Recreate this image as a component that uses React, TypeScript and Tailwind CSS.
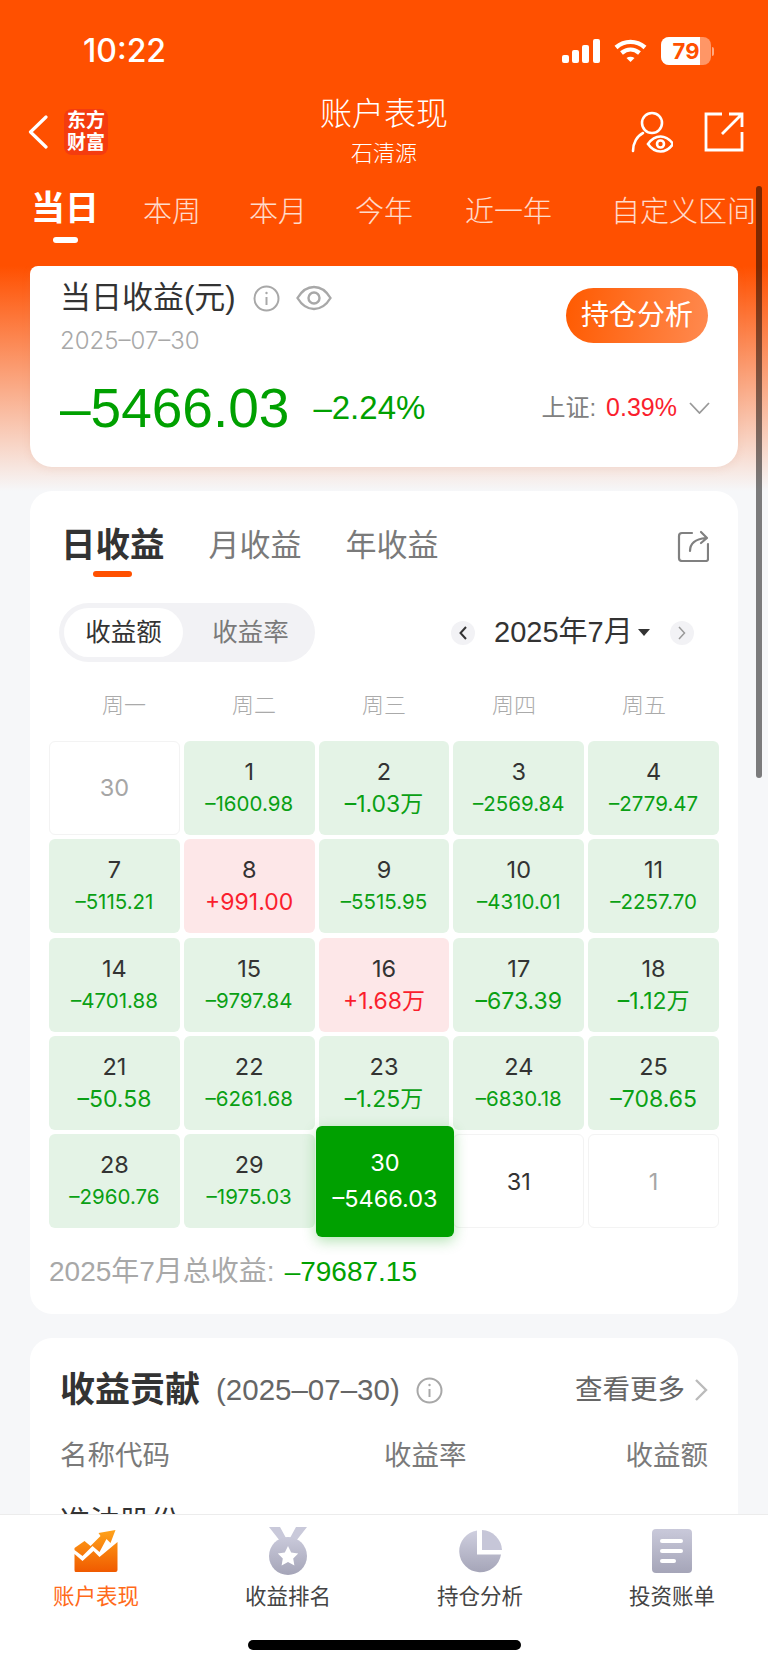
const FONT = '[font-family:"Liberation_Sans","Noto_Sans_CJK_SC",sans-serif]';

type Cell = { day: string; value?: string; kind: 'down' | 'up' | 'blank' | 'future' | 'today'; small?: boolean };

const CELLS: Cell[] = [
  { day: '30', kind: 'blank' },
  { day: '1', value: '–1600.98', kind: 'down', small: true },
  { day: '2', value: '–1.03万', kind: 'down' },
  { day: '3', value: '–2569.84', kind: 'down', small: true },
  { day: '4', value: '–2779.47', kind: 'down', small: true },
  { day: '7', value: '–5115.21', kind: 'down', small: true },
  { day: '8', value: '+991.00', kind: 'up' },
  { day: '9', value: '–5515.95', kind: 'down', small: true },
  { day: '10', value: '–4310.01', kind: 'down', small: true },
  { day: '11', value: '–2257.70', kind: 'down', small: true },
  { day: '14', value: '–4701.88', kind: 'down', small: true },
  { day: '15', value: '–9797.84', kind: 'down', small: true },
  { day: '16', value: '+1.68万', kind: 'up' },
  { day: '17', value: '–673.39', kind: 'down' },
  { day: '18', value: '–1.12万', kind: 'down' },
  { day: '21', value: '–50.58', kind: 'down' },
  { day: '22', value: '–6261.68', kind: 'down', small: true },
  { day: '23', value: '–1.25万', kind: 'down' },
  { day: '24', value: '–6830.18', kind: 'down', small: true },
  { day: '25', value: '–708.65', kind: 'down' },
  { day: '28', value: '–2960.76', kind: 'down', small: true },
  { day: '29', value: '–1975.03', kind: 'down', small: true },
  { day: '30', value: '–5466.03', kind: 'today' },
  { day: '31', kind: 'future' },
  { day: '1', kind: 'blank' },
];

function InfoIcon({ size = 27 }: { size?: number }) {
  return (
    <svg width={size} height={size} viewBox="0 0 27 27" fill="none" stroke="#a8a8a8" strokeWidth="2">
      <circle cx="13.5" cy="13.5" r="12" />
      <path d="M13.5 12v8" />
      <circle cx="13.5" cy="8" r="1.2" fill="#a8a8a8" stroke="none" />
    </svg>
  );
}

function CalendarCell({ cell }: { cell: Cell }) {
  if (cell.kind === 'blank' || cell.kind === 'future') {
    return (
      <div className={`h-[94px] rounded-[6px] border border-[#f3f3f3] bg-white flex items-center justify-center text-[23.5px] ${cell.kind === 'blank' ? 'text-[#a6a6a6]' : 'text-[#333]'}`}>
        {cell.day}
      </div>
    );
  }
  if (cell.kind === 'today') {
    return (
      <div className="relative h-[94px]">
        <div className="absolute -left-[3px] -right-[5px] -top-[8px] -bottom-[9px] z-10 rounded-[6px] bg-[#00a000] text-white flex flex-col items-center pt-[21px] shadow-[0_4px_14px_rgba(0,160,0,0.3)]">
          <div className="text-[23.5px] leading-[32px]">{cell.day}</div>
          <div className="text-[23.5px] leading-[32px] mt-[4px]">{cell.value}</div>
        </div>
      </div>
    );
  }
  const up = cell.kind === 'up';
  return (
    <div className={`h-[94px] rounded-[6px] flex flex-col items-center pt-[15px] ${up ? 'bg-[#fde7e8]' : 'bg-[#e4f3e6]'}`}>
      <div className="text-[23.5px] leading-[32px] text-[#333]">{cell.day}</div>
      <div className={`leading-[32px] ${cell.small ? 'text-[20.5px]' : 'text-[23px]'} ${up ? 'text-[#fa1e2d]' : 'text-[#0aa014]'}`}>{cell.value}</div>
    </div>
  );
}

function StatusBar() {
  return (
    <div className="flex items-center justify-between h-[102px] pl-[83px] pr-[54px] text-white">
      <span className="[font-family:Inter,sans-serif] text-[32px] font-medium leading-[32px]">10:22</span>
      <div className="flex items-center gap-[14px]">
        <svg width="38" height="24" viewBox="0 0 38 24" fill="white">
          <rect x="0" y="16" width="7" height="8" rx="2" />
          <rect x="10" y="11" width="7" height="13" rx="2" />
          <rect x="20" y="6" width="7" height="18" rx="2" />
          <rect x="31" y="0" width="7" height="24" rx="2" />
        </svg>
        <svg width="33" height="24" viewBox="0 0 33 24" fill="none" stroke="white" strokeWidth="4.4">
          <path d="M2 8.5C10.5 1 22.5 1 31 8.5" />
          <path d="M7.5 14c5.500-4.500 12.500-4.500 18 0" />
          <path d="M12.500 19l4 4 4-4c-2.500-1.800-5.500-1.800-8 0z" fill="white" stroke="none" />
        </svg>
        <div className="flex items-center">
          <div className="relative w-[50px] h-[28px] rounded-[8px] overflow-hidden bg-white/40">
            <div className="h-full w-[39px] bg-white" />
            <span className="absolute inset-0 flex items-center justify-center [font-family:Inter,sans-serif] text-[22px] font-bold text-[#ff5000]">79</span>
          </div>
          <div className="w-[2px] h-[9px] ml-[1px] rounded-r-full bg-white/50" />
        </div>
      </div>
    </div>
  );
}

function NavBar() {
  return (
    <div className="flex items-center justify-between h-[60px] pl-[28px] pr-[24px] text-white">
      <div className="flex items-center gap-[16px] w-[180px]">
        <svg width="20" height="34" viewBox="0 0 20 34" fill="none" stroke="white" strokeWidth="3.2" strokeLinecap="round" strokeLinejoin="round">
          <path d="M18 2 2.500 17 18 32" />
        </svg>
        <div className="w-[44px] h-[46px] rounded-[8px] bg-[#f43c0f] flex flex-col items-center justify-center text-[19px] leading-[22px] font-bold">
          <span>东方</span>
          <span>财富</span>
        </div>
      </div>
      <div className="flex flex-col items-center -ml-[4px]">
        <div className="text-[32px] leading-[44px] font-light">账户表现</div>
        <div className="text-[22px] leading-[36px] font-light">石清源</div>
      </div>
      <div className="flex items-center justify-end gap-[31px] w-[180px]">
        <svg width="44" height="42" viewBox="0 0 44 42" fill="none" stroke="white" strokeWidth="2.6" strokeLinecap="round">
          <circle cx="23" cy="12" r="10" />
          <path d="M4 40c0-8 4-15 10-18" />
          <path d="M19 33c3.500-5 8-7.500 12.500-7.500S40.500 28 44 33c-3.500 5-8 7.500-12.500 7.500S22.500 38 19 33z" />
          <circle cx="31.500" cy="33" r="3.500" />
        </svg>
        <svg width="40" height="40" viewBox="0 0 40 40" fill="none" stroke="white" strokeWidth="2.8">
          <path d="M18 2H2v36h36V20" />
          <path d="M18 22 38 2M25 2h13v13" />
        </svg>
      </div>
    </div>
  );
}

function RangeTabs() {
  return (
    <div className="relative flex items-center h-[102px] pl-[31px] text-[29px] text-white/80 font-light whitespace-nowrap">
      <span className="text-[34px] font-bold text-white -mt-[10px]">当日</span>
      <span className="ml-[44px]">本周</span>
      <span className="ml-[48px]">本月</span>
      <span className="ml-[48px]">今年</span>
      <span className="ml-[52px]">近一年</span>
      <span className="ml-[59px]">自定义区间</span>
      <div className="absolute left-[53px] top-[75px] w-[25px] h-[6px] rounded-full bg-white" />
    </div>
  );
}

function HeroCard() {
  return (
    <div className="mx-[30px] h-[201px] rounded-b-[22px] rounded-t-[8px] bg-white shadow-[0_2px_8px_rgba(200,120,90,0.12)] px-[30px] pt-[12px]">
      <div className="flex justify-between">
        <div>
          <div className="flex items-center">
            <span className="text-[31px] leading-[40px] text-[#333]">当日收益(元)</span>
            <span className="ml-[17px]"><InfoIcon /></span>
            <svg className="ml-[16px]" width="36" height="26" viewBox="0 0 36 26" fill="none" stroke="#a8a8a8" strokeWidth="2.4">
              <path d="M1.500 13C6 5.500 12 2 18 2s12 3.500 16.500 11C30 20.500 24 24 18 24S6 20.500 1.500 13z" />
              <circle cx="18" cy="13" r="5.500" />
            </svg>
          </div>
          <div className="text-[24px] leading-[32px] mt-[7px] text-[#a8a8a8] [font-family:Inter,sans-serif] font-light">2025–07–30</div>
        </div>
        <div className="mt-[10px] w-[142px] h-[55px] rounded-full bg-[linear-gradient(100deg,#ff5a00,#ff8a50)] flex items-center justify-center text-[28px] text-white">
          持仓分析
        </div>
      </div>
      <div className="flex items-center mt-[19px] -mr-[2px]">
        <span className="text-[55px] leading-[64px] text-[#00a000] font-medium">–5466.03</span>
        <span className="ml-[24px] text-[33px] text-[#00a000]">–2.24%</span>
        <span className="ml-auto text-[24px] text-[#808080]">上证:</span>
        <span className="ml-[10px] text-[25px] text-[#fa1e2d]">0.39%</span>
        <svg className="ml-[12px]" width="21" height="12" viewBox="0 0 21 12" fill="none" stroke="#999" strokeWidth="1.800">
          <path d="m1 1 9.500 10L20 1" />
        </svg>
      </div>
    </div>
  );
}

function CalendarCard() {
  return (
    <div className="mt-[24px] mx-[30px] h-[823px] rounded-[22px] bg-white px-[19px] pt-[32px]">
      <div className="flex items-center justify-between h-[46px] pl-[16px] pr-[10px]">
        <div className="flex items-center gap-[44px] -ml-[4px]">
          <span className="text-[34.5px] font-bold text-[#333]">日收益</span>
          <span className="text-[31px] text-[#7a7a7a]">月收益</span>
          <span className="text-[31px] text-[#7a7a7a]">年收益</span>
        </div>
        <svg width="32" height="32" viewBox="0 0 32 32" fill="none" stroke="#808080" strokeWidth="2.200" strokeLinecap="round" strokeLinejoin="round">
          <path d="M15 3H5a3 3 0 0 0-3 3v22a3 3 0 0 0 3 3h24a2 2 0 0 0 2-2V14" />
          <path d="M13 21c0-8 5-12 16-13M24 2l6 6-6 5" />
        </svg>
      </div>
      <div className="ml-[44px] mt-[2px] w-[39px] h-[6px] rounded-full bg-[#ff5000]" />
      <div className="flex items-center mt-[26px] pl-[10px]">
        <div className="flex items-center w-[256px] h-[59px] rounded-full bg-[#f2f2f5] p-[5px]">
          <div className="w-[119px] h-full rounded-full bg-white flex items-center justify-center text-[25.5px] text-[#333]">收益额</div>
          <div className="flex-1 text-center pl-[8px] text-[25.5px] text-[#7a7a7a]">收益率</div>
        </div>
        <div className="ml-[136px] w-[24px] h-[24px] rounded-full bg-[#f2f2f5] flex items-center justify-center">
          <svg width="8" height="14" viewBox="0 0 8 14" fill="none" stroke="#333" strokeWidth="2"><path d="M7 1 1.500 7 7 13" /></svg>
        </div>
        <span className="ml-[19px] text-[29px] text-[#333]">2025年7月</span>
        <div className="ml-[5px] w-0 h-0 border-x-[6px] border-x-transparent border-t-[7px] border-t-[#333]" />
        <div className="ml-[20px] w-[24px] h-[24px] rounded-full bg-[#f2f2f5] flex items-center justify-center">
          <svg width="8" height="14" viewBox="0 0 8 14" fill="none" stroke="#999" strokeWidth="1.500"><path d="m1 1 5.500 6L1 13" /></svg>
        </div>
      </div>
      <div className="grid grid-cols-5 mt-[27px] px-[10px] h-[30px] items-center text-center text-[22px] font-light text-[#aaaaaa]">
        {['周一', '周二', '周三', '周四', '周五'].map((w) => (
          <div key={w}>{w}</div>
        ))}
      </div>
      <div className="grid grid-cols-5 gap-x-[4px] gap-y-[4.300px] mt-[22px] [font-family:Inter,'Noto_Sans_CJK_SC',sans-serif]">
        {CELLS.map((c, i) => (
          <CalendarCell key={i} cell={c} />
        ))}
      </div>
      <div className="mt-[26px] flex items-center leading-[36px]">
        <span className="text-[28px] text-[#a8a8a8]">2025年7月总收益:</span>
        <span className="ml-[10px] text-[28px] text-[#00a000]">–79687.15</span>
      </div>
    </div>
  );
}

function ContributionCard() {
  return (
    <div className="mt-[24px] mx-[30px] h-[300px] rounded-t-[22px] bg-white px-[30px] pt-[30px]">
      <div className="flex items-center h-[44px]">
        <span className="text-[35px] font-bold text-[#333]">收益贡献</span>
        <span className="ml-[16px] text-[29.5px] text-[#666]">(2025–07–30)</span>
        <span className="ml-[16px]"><InfoIcon /></span>
        <span className="ml-auto text-[27.5px] text-[#666]">查看更多</span>
        <svg className="ml-[9px]" width="14" height="24" viewBox="0 0 14 24" fill="none" stroke="#bbb" strokeWidth="2.400"><path d="m2 2 10 10L2 22" /></svg>
      </div>
      <div className="flex items-center mt-[24px] h-[40px] text-[27.5px] text-[#7a7a7a]">
        <span className="w-[324px]">名称代码</span>
        <span>收益率</span>
        <span className="ml-auto">收益额</span>
      </div>
      <div className="mt-[26px] text-[30px] leading-[40px] text-[#333]">准油股份</div>
    </div>
  );
}

function TabIcon({ index }: { index: number }) {
  if (index === 0) {
    return (
      <svg width="46" height="46" viewBox="-1.500 -2 46 46">
        <defs>
          <linearGradient id="acc" gradientUnits="userSpaceOnUse" x1="0" y1="0" x2="0" y2="42">
            <stop offset="0" stopColor="#ffa31a" />
            <stop offset="1" stopColor="#f05a00" />
          </linearGradient>
        </defs>
        <path d="M0 24l8 7 11-10 6 6 18-15v28q0 2-2 2H1q-1 0-1-2z" fill="url(#acc)" />
        <path d="M0 18 10 11l6 5L26 6l-2-3L41 0l-5 13-4-4-7 13-7-6L8 26l-8-6z" fill="url(#acc)" />
      </svg>
    );
  }
  if (index === 1) {
    return (
      <svg width="40" height="48" viewBox="0 0 40 48">
        <defs>
          <linearGradient id="med" x1="0" y1="0" x2="0" y2="1">
            <stop offset="0" stopColor="#c9c9da" />
            <stop offset="1" stopColor="#a5a5b8" />
          </linearGradient>
        </defs>
        <path d="M1 0h11l6 11-6 3zM39 0H28l-6 11 6 3z" fill="#c9c9da" />
        <ellipse cx="20" cy="29" rx="19" ry="19" fill="url(#med)" />
        <path d="m20 19 3.200 6.500 7 1-5 5 1.200 7L20 35l-6.400 3.500 1.200-7-5-5 7-1z" fill="white" />
      </svg>
    );
  }
  if (index === 2) {
    return (
      <svg width="44" height="44" viewBox="0 0 44 44">
        <defs>
          <linearGradient id="pie" x1="0" y1="0" x2="0" y2="1">
            <stop offset="0" stopColor="#cfcfdf" />
            <stop offset="1" stopColor="#a5a5b8" />
          </linearGradient>
        </defs>
        <path d="M19 1.500A21 21 0 1 0 43 25.500H19z" fill="url(#pie)" />
        <path d="M24 1a21 21 0 0 1 20 20H24z" fill="#c6c6d8" />
      </svg>
    );
  }
  return (
    <svg width="40" height="44" viewBox="0 0 40 44">
      <defs>
        <linearGradient id="doc" x1="0" y1="0" x2="0" y2="1">
          <stop offset="0" stopColor="#c9c9da" />
          <stop offset="1" stopColor="#a5a5b8" />
        </linearGradient>
      </defs>
      <rect width="40" height="44" rx="4" fill="url(#doc)" />
      <rect x="8" y="10" width="23" height="4" rx="2" fill="white" />
      <rect x="8" y="20" width="23" height="4" rx="2" fill="white" />
      <rect x="8" y="30" width="16" height="4" rx="2" fill="white" />
    </svg>
  );
}

function BottomBar() {
  const labels = ['账户表现', '收益排名', '持仓分析', '投资账单'];
  return (
    <div className="relative z-20 h-[149px] shrink-0 border-t border-[#ececec] bg-white">
      <div className="grid grid-cols-4 pt-[12px]">
        {labels.map((label, i) => (
          <div key={label} className="flex flex-col items-center">
            <div className="h-[48px] flex items-center justify-center">
              <TabIcon index={i} />
            </div>
            <div className={`mt-[6px] text-[21.500px] leading-[32px] ${i === 0 ? 'text-[#ff6a1a]' : 'text-[#444]'}`}>{label}</div>
          </div>
        ))}
      </div>
      <div className="mx-auto mt-[27px] w-[273px] h-[10px] rounded-full bg-black" />
    </div>
  );
}

export default function App() {
  return (
    <div className={`relative flex flex-col w-[768px] h-[1663px] overflow-hidden bg-[#f6f7f9] ${FONT}`}>
      {/* Top orange header */}
      <div className="relative z-20 h-[266px] shrink-0 bg-[#ff5000]">
        <StatusBar />
        <NavBar />
        <RangeTabs />
      </div>

      <div className="flex-1 overflow-hidden bg-[linear-gradient(180deg,#ff5000_0px,#f6f7f9_225px)]">
        <HeroCard />
        <CalendarCard />
        <ContributionCard />
      </div>

      <BottomBar />

      {/* Scrollbar */}
      <div className="absolute z-30 left-[756px] top-[186px] w-[6px] h-[592px] rounded-full bg-black/50" />
    </div>
  );
}
